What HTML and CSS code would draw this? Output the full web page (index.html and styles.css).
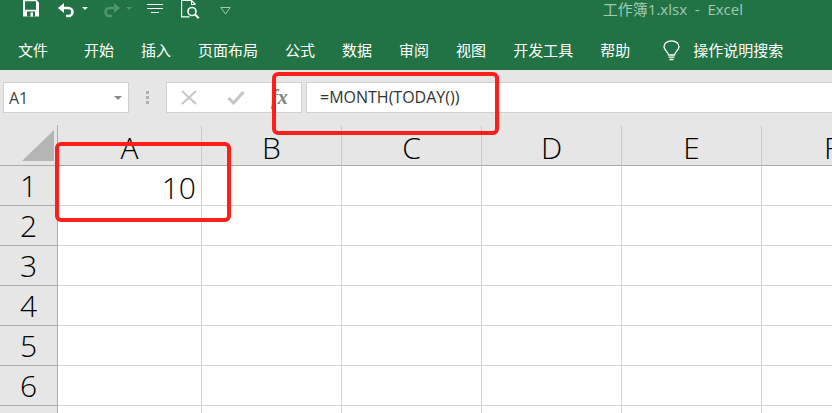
FILE: index.html
```html
<!DOCTYPE html>
<html lang="zh-CN">
<head>
  <meta charset="UTF-8" />
  <title>工作簿1.xlsx - Excel</title>
  <link rel="stylesheet" href="styles.css">
</head>
<body>
  <div class="titlebar">
    <div class="qat">
      <svg class="ic-save" width="18" height="18" viewBox="0 0 18 18"><path fill="#fff" d="M1 0h13.500L17 2.500V16.500H1z"/><path fill="#217346" d="M3 1.200h11v8.600H3zM5 11.500h8v5H5z"/><path fill="#fff" d="M8.500 12.500h2.500v4H8.500z"/></svg>
      <svg class="ic-undo" width="20" height="18" viewBox="0 0 20 18"><path fill="none" stroke="#fff" stroke-width="2.600" d="M4 8h7.500a4 4 0 0 1 0 8H9"/><path fill="#fff" d="M1 8 7 3v10z"/></svg>
      <span class="caret"></span>
      <svg class="ic-redo" width="19" height="18" viewBox="0 0 19 18"><path fill="none" stroke="#4f9570" stroke-width="2.600" d="M15 8H7.500a4 4 0 0 0 0 8H10"/><path fill="#4f9570" d="M18 8 12 3v10z"/></svg>
      <span class="caret dim"></span>
      <svg class="ic-align" width="17" height="14" viewBox="0 0 17 14"><path stroke="#fff" stroke-width="1" d="M0 1.500h16M0 5.500h16M4 9.500h8"/></svg>
      <svg class="ic-preview" width="19" height="19" viewBox="0 0 19 19"><path fill="none" stroke="#fff" stroke-width="1.100" d="M10.500 .5H.6v16.400h8M10.500 .5l4 4M10.500 .5v4h4"/><circle cx="11" cy="11.500" r="4" fill="none" stroke="#fff" stroke-width="1.600"/><path stroke="#fff" stroke-width="2.200" d="m13.800 14.300 3.900 3.900"/></svg>
      <svg class="ic-more" width="11" height="8" viewBox="0 0 11 8"><path fill="none" stroke="#a3c8b4" d="M.8.500h9.400L5.500 7z"/></svg>
    </div>
    <div class="doc-title">工作簿1.xlsx&nbsp; -&nbsp; Excel</div>
  </div>

  <div class="ribbon">
    <span class="tab tab-file">文件</span>
    <span class="tab">开始</span>
    <span class="tab">插入</span>
    <span class="tab">页面布局</span>
    <span class="tab">公式</span>
    <span class="tab">数据</span>
    <span class="tab">审阅</span>
    <span class="tab">视图</span>
    <span class="tab">开发工具</span>
    <span class="tab">帮助</span>
    <svg class="bulb" width="17" height="21" viewBox="0 0 17 21"><path fill="none" stroke="#fff" stroke-width="1.300" d="M5.500 15c0-3-4.500-4.500-4.500-8.200a7.500 6 0 0 1 15 0c0 3.700-4.500 5.200-4.500 8.200z"/><path stroke="#fff" stroke-width="1.300" d="M5.500 17.200h6M6.500 19.500h4"/></svg>
    <span class="tab">操作说明搜索</span>
  </div>

  <div class="formula-bar">
    <div class="name-box">A1<span class="name-caret"></span></div>
    <div class="grip"><i></i><i></i><i></i></div>
    <div class="fx-buttons">
      <svg width="16" height="16" viewBox="0 0 16 16"><path stroke="#c6c6c6" stroke-width="2" d="m1 1 14 13M15 1 1 14"/></svg>
      <svg width="18" height="15" viewBox="0 0 18 15"><path fill="none" stroke="#c6c6c6" stroke-width="3" d="m1.500 8 5 5 10-11"/></svg>
      <span class="fx">fx</span>
    </div>
    <div class="formula-input">=MONTH(TODAY())</div>
  </div>

  <div class="sheet">
    <div class="corner"><svg width="57" height="40" viewBox="0 0 57 40"><path fill="#b5b5b5" d="M22 36h32V5z"/></svg></div>
    <div class="col col-a">A</div><div class="col">B</div><div class="col">C</div><div class="col">D</div><div class="col">E</div><div class="col">F</div>

    <div class="row-head">1</div><div class="cell num">10</div><div class="cell"></div><div class="cell"></div><div class="cell"></div><div class="cell"></div><div class="cell"></div>
    <div class="row-head">2</div><div class="cell"></div><div class="cell"></div><div class="cell"></div><div class="cell"></div><div class="cell"></div><div class="cell"></div>
    <div class="row-head">3</div><div class="cell"></div><div class="cell"></div><div class="cell"></div><div class="cell"></div><div class="cell"></div><div class="cell"></div>
    <div class="row-head">4</div><div class="cell"></div><div class="cell"></div><div class="cell"></div><div class="cell"></div><div class="cell"></div><div class="cell"></div>
    <div class="row-head">5</div><div class="cell"></div><div class="cell"></div><div class="cell"></div><div class="cell"></div><div class="cell"></div><div class="cell"></div>
    <div class="row-head">6</div><div class="cell"></div><div class="cell"></div><div class="cell"></div><div class="cell"></div><div class="cell"></div><div class="cell"></div>
    <div class="row-head"></div><div class="cell"></div><div class="cell"></div><div class="cell"></div><div class="cell"></div><div class="cell"></div><div class="cell"></div>
  </div>

  <div class="mark mark-formula"></div>
  <div class="mark mark-cell"></div>
</body>
</html>
```

FILE: styles.css
```css
body {
  margin: 0;
  width: 832px;
  height: 413px;
  overflow: hidden;
  position: relative;
  background: #fff;
  font-family: "Open Sans", "Noto Sans CJK SC", sans-serif;
}
.titlebar {
  height: 32px;
  background: #217346;
  display: flex;
  justify-content: space-between;
}
.qat {
  display: flex;
  align-items: flex-start;
  padding-left: 22px;
}
.ic-undo { margin-left: 17px; }
.caret {
  width: 0;
  height: 0;
  margin: 7px 0 0 5px;
  border-left: 3px solid transparent;
  border-right: 3px solid transparent;
  border-top: 3px solid #fff;
}
.caret.dim { border-top-color: #4f9570; }
.ic-redo { margin-left: 14px; }
.ic-align { margin: 3px 0 0 15px; }
.ic-preview { margin-left: 17px; }
.ic-more { margin: 7px 0 0 20px; }
.doc-title {
  margin-right: 89px;
  font-size: 15px;
  line-height: 18px;
  white-space: nowrap;
  color: #a3c8b4;
}
.ribbon {
  height: 38px;
  box-sizing: border-box;
  padding: 0 0 2px 18px;
  background: #217346;
  display: flex;
  align-items: center;
  gap: 27px;
  font-size: 15px;
  color: #fff;
}
.tab { white-space: nowrap; line-height: 36px; }
.tab-file { margin-right: 9px; }
.bulb { margin: 0 -14px 0 6px; }

.formula-bar {
  height: 55px;
  box-sizing: border-box;
  padding: 12px 0 0 3px;
  background: #e6e6e6;
  display: flex;
  align-items: flex-start;
}
.name-box {
  width: 126px;
  height: 31px;
  box-sizing: border-box;
  background: #fff;
  border: 1px solid #d0d0d0;
  display: flex;
  align-items: center;
  justify-content: space-between;
  padding: 0 6px 0 5px;
  font-size: 16px;
  color: #444;
}
.name-caret {
  width: 0;
  height: 0;
  border-left: 4px solid transparent;
  border-right: 4px solid transparent;
  border-top: 4px solid #8a8a8a;
}
.grip {
  display: flex;
  flex-direction: column;
  gap: 2px;
  margin: 9px 17px 0 17px;
}
.grip i {
  display: block;
  width: 3px;
  height: 3px;
  background: #b0b0b0;
}
.fx-buttons {
  width: 136px;
  height: 31px;
  box-sizing: border-box;
  background: #fff;
  border: 1px solid #d0d0d0;
  display: flex;
  align-items: center;
  padding-left: 14px;
  gap: 30px;
}
.fx {
  margin-left: -4px;
  font-family: "Liberation Serif", serif;
  font-style: italic;
  font-weight: 700;
  font-size: 20px;
  color: #808080;
}
.formula-input {
  flex: 1;
  height: 31px;
  box-sizing: border-box;
  margin-left: 4px;
  background: #fff;
  border: 1px solid #d0d0d0;
  border-right: 0;
  padding-left: 13px;
  font-size: 16px;
  line-height: 29px;
  color: #333;
}

.sheet {
  height: 288px;
  overflow: hidden;
  display: grid;
  grid-template-columns: 58px 144px repeat(5, 140px);
  grid-template-rows: 41px repeat(7, 40px);
  background: #fff;
}
.corner, .col, .row-head {
  background: #e6e6e6;
  color: #000;
  font-size: 30px;
  font-weight: 350;
  box-sizing: border-box;
  display: flex;
  align-items: center;
  justify-content: center;
  border-bottom: 1px solid #ababab;
}
.corner {
  align-items: flex-start;
  justify-content: flex-start;
  border-right: 1px solid #ababab;
}
.col {
  border-right: 1px solid #c8c8c8;
  border-top: 2px solid #e6e6e6;
  padding-top: 3px;
}
.row-head {
  border-right: 1px solid #ababab;
}
.cell {
  box-sizing: border-box;
  border-right: 1px solid #d4d4d4;
  border-bottom: 1px solid #d4d4d4;
}
.num {
  font-size: 30px;
  font-weight: 350;
  color: #000;
  text-align: right;
  line-height: 44px;
  padding-right: 5px;
}

.mark {
  position: absolute;
  box-sizing: border-box;
  border: 4px solid #ff1f1a;
  border-radius: 6px;
}
.mark-formula {
  left: 272px;
  top: 72px;
  width: 227px;
  height: 63px;
}
.mark-cell {
  left: 55px;
  top: 142px;
  width: 176px;
  height: 80px;
}
```
